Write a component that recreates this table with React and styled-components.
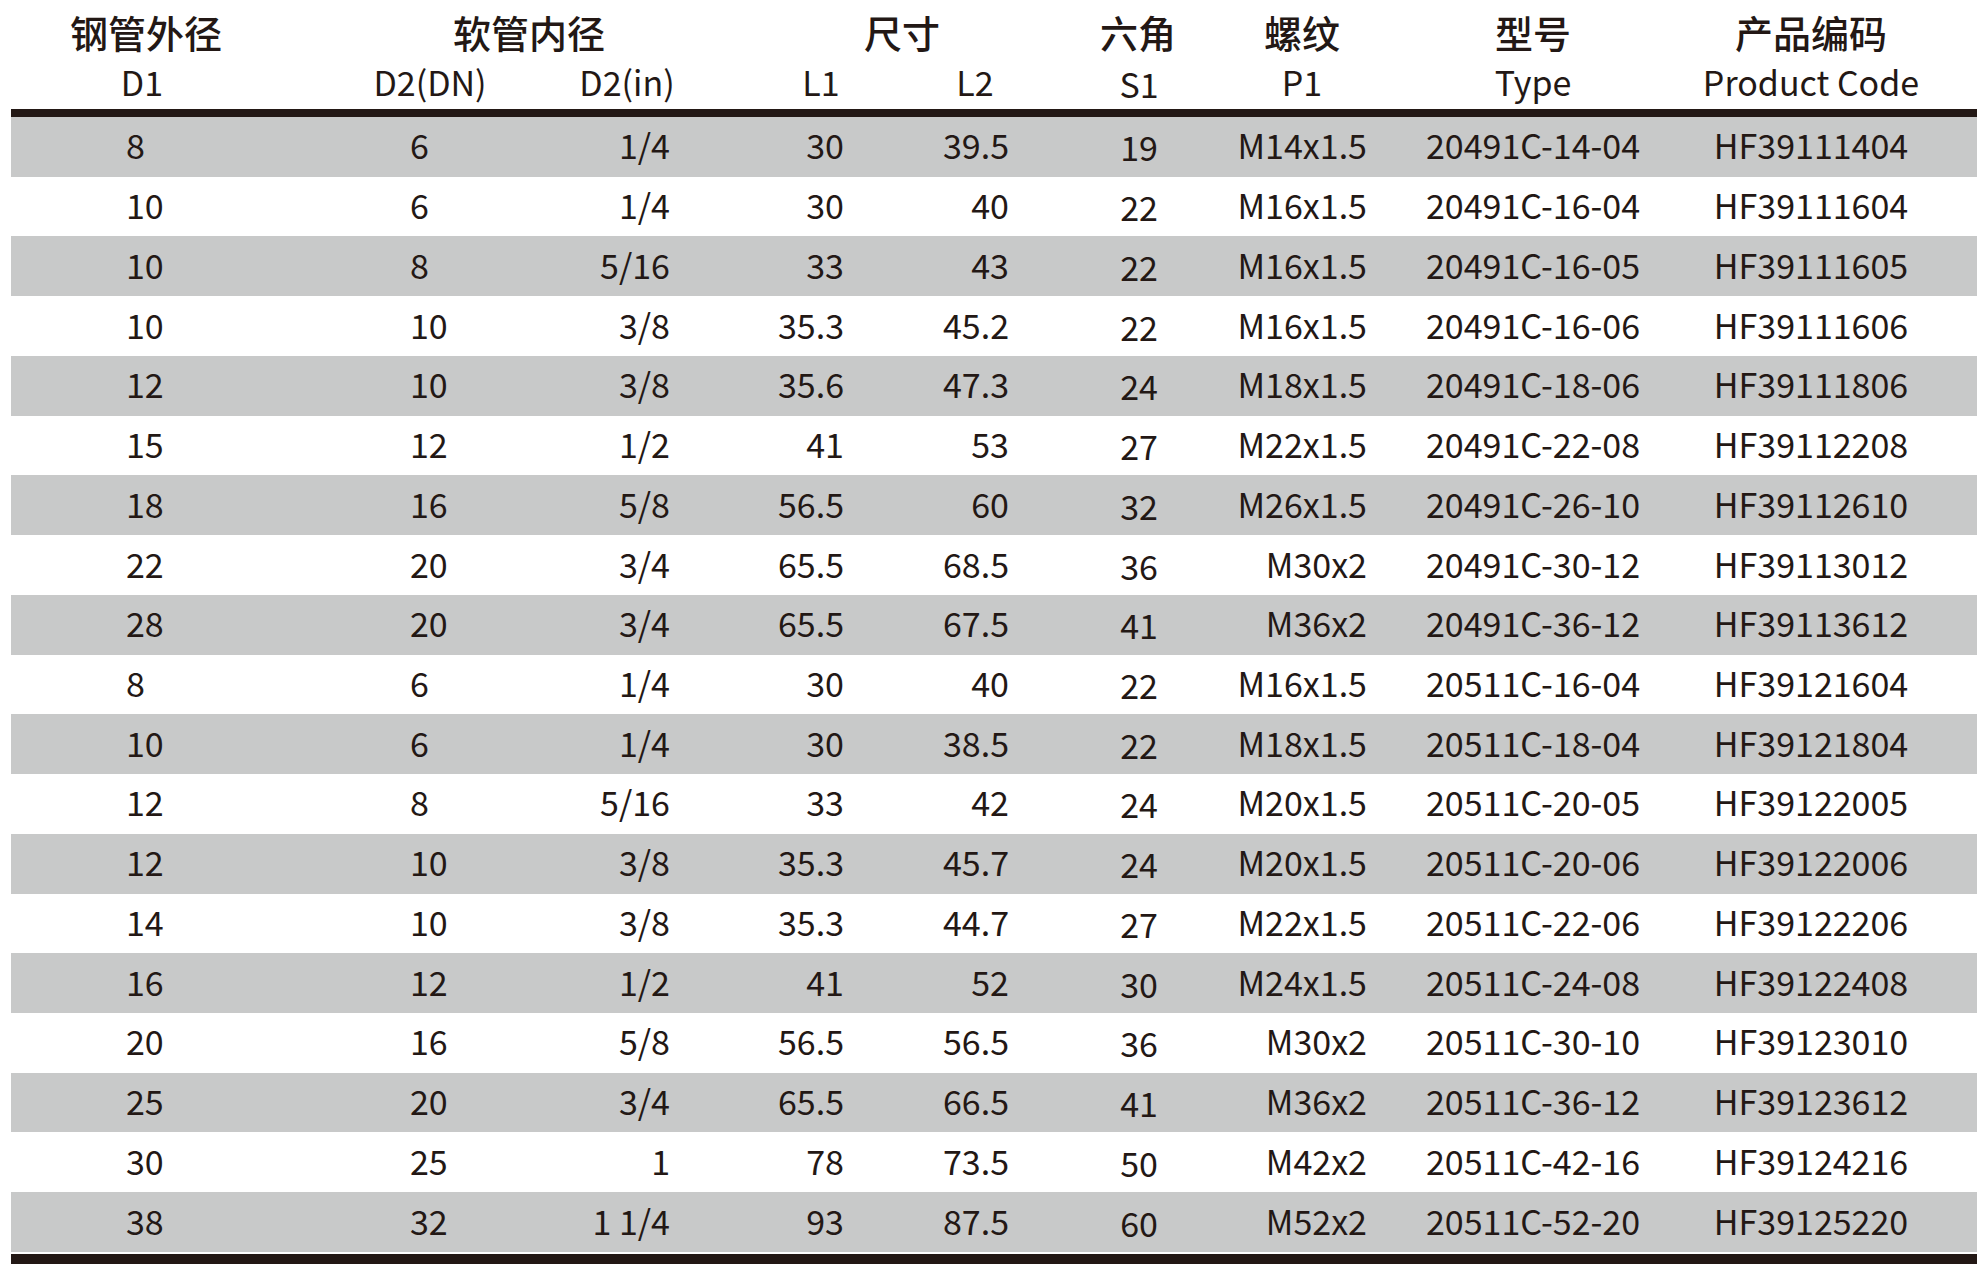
import React from "react";
import styled, { createGlobalStyle } from "styled-components";

const GlobalStyle = createGlobalStyle`
  html, body {
    margin: 0;
    padding: 0;
    background: #fff;
  }
  body {
    font-family: "Noto Sans CJK SC", "Noto Sans", sans-serif;
    color: #231815;
  }
`;

// 列宽与对齐 (左边界 11px)
const COLS = "269px 250px 170px 180px 170px 170px 200px 240px 317px";

const groups = [
  { label: "钢管外径", span: 1, pl: 1, pr: 0 },
  { label: "软管内径", span: 2, pl: 78, pr: 0 },
  { label: "尺寸", span: 2, pl: 54, pr: 0 },
  { label: "六角", span: 1, pl: 6, pr: 0 },
  { label: "螺纹", span: 1, pl: 0, pr: 36 },
  { label: "型号", span: 1, pl: 0, pr: 14 },
  { label: "产品编码", span: 1, pl: 0, pr: 15 },
];

const columns = [
  { sub: "D1", subPl: 0, subPr: 7, align: "left", pl: 115, pr: 0 },
  { sub: "D2(DN)", subPl: 50, subPr: 0, align: "left", pl: 130, pr: 0 },
  { sub: "D2(in)", subPl: 24, subPr: 0, align: "right", pl: 0, pr: 30 },
  { sub: "L1", subPl: 62, subPr: 0, align: "right", pl: 0, pr: 36 },
  { sub: "L2", subPl: 20, subPr: 0, align: "right", pl: 0, pr: 41 },
  { sub: "S1", subPl: 8, subPr: 0, align: "center", pl: 8, pr: 0, low: true },
  { sub: "P1", subPl: 0, subPr: 36, align: "right", pl: 0, pr: 53 },
  { sub: "Type", subPl: 0, subPr: 14, align: "center", pl: 0, pr: 14 },
  { sub: "Product Code", subPl: 0, subPr: 15, align: "center", pl: 0, pr: 15 },
];

const rows = [
  ["8", "6", "1/4", "30", "39.5", "19", "M14x1.5", "20491C-14-04", "HF39111404"],
  ["10", "6", "1/4", "30", "40", "22", "M16x1.5", "20491C-16-04", "HF39111604"],
  ["10", "8", "5/16", "33", "43", "22", "M16x1.5", "20491C-16-05", "HF39111605"],
  ["10", "10", "3/8", "35.3", "45.2", "22", "M16x1.5", "20491C-16-06", "HF39111606"],
  ["12", "10", "3/8", "35.6", "47.3", "24", "M18x1.5", "20491C-18-06", "HF39111806"],
  ["15", "12", "1/2", "41", "53", "27", "M22x1.5", "20491C-22-08", "HF39112208"],
  ["18", "16", "5/8", "56.5", "60", "32", "M26x1.5", "20491C-26-10", "HF39112610"],
  ["22", "20", "3/4", "65.5", "68.5", "36", "M30x2", "20491C-30-12", "HF39113012"],
  ["28", "20", "3/4", "65.5", "67.5", "41", "M36x2", "20491C-36-12", "HF39113612"],
  ["8", "6", "1/4", "30", "40", "22", "M16x1.5", "20511C-16-04", "HF39121604"],
  ["10", "6", "1/4", "30", "38.5", "22", "M18x1.5", "20511C-18-04", "HF39121804"],
  ["12", "8", "5/16", "33", "42", "24", "M20x1.5", "20511C-20-05", "HF39122005"],
  ["12", "10", "3/8", "35.3", "45.7", "24", "M20x1.5", "20511C-20-06", "HF39122006"],
  ["14", "10", "3/8", "35.3", "44.7", "27", "M22x1.5", "20511C-22-06", "HF39122206"],
  ["16", "12", "1/2", "41", "52", "30", "M24x1.5", "20511C-24-08", "HF39122408"],
  ["20", "16", "5/8", "56.5", "56.5", "36", "M30x2", "20511C-30-10", "HF39123010"],
  ["25", "20", "3/4", "65.5", "66.5", "41", "M36x2", "20511C-36-12", "HF39123612"],
  ["30", "25", "1", "78", "73.5", "50", "M42x2", "20511C-42-16", "HF39124216"],
  ["38", "32", "1 1/4", "93", "87.5", "60", "M52x2", "20511C-52-20", "HF39125220"],
];

const justify = { left: "flex-start", right: "flex-end", center: "center" };

const App = () => {
  return (
    <>
      <GlobalStyle />
      <Page>
        <Table>
          <GroupRow>
            {groups.map((g) => (
              <GroupCell key={g.label} $span={g.span} $pl={g.pl} $pr={g.pr}>
                {g.label}
              </GroupCell>
            ))}
          </GroupRow>
          <SubRow>
            {columns.map((c) => (
              <SubCell key={c.sub} $pl={c.subPl} $pr={c.subPr} $low={c.low}>
                {c.sub}
              </SubCell>
            ))}
          </SubRow>
          <TopRule />
          {rows.map((r, i) => (
            <BodyRow key={i} $shade={i % 2 === 0}>
              {r.map((v, j) => (
                <DataCell
                  key={j}
                  $align={columns[j].align}
                  $pl={columns[j].pl}
                  $pr={columns[j].pr}
                  $low={columns[j].low}
                >
                  {v}
                </DataCell>
              ))}
            </BodyRow>
          ))}
          <BottomRule />
        </Table>
      </Page>
    </>
  );
};

const Page = styled.div`
  width: 1979px;
  height: 1270px;
  padding-left: 11px;
  box-sizing: border-box;
  overflow: hidden;
`;
const Table = styled.div`
  width: 1966px;
  display: flex;
  flex-direction: column;
`;
const GroupRow = styled.div`
  display: grid;
  grid-template-columns: ${COLS};
  grid-template-rows: 62px;
`;
const GroupCell = styled.div`
  grid-column: span ${(p) => p.$span};
  display: flex;
  align-items: center;
  justify-content: center;
  box-sizing: border-box;
  padding: 2px ${(p) => p.$pr}px 0 ${(p) => p.$pl}px;
  font-size: 38px;
  font-weight: 500;
  line-height: 1;
  white-space: nowrap;
`;
const SubRow = styled.div`
  display: grid;
  grid-template-columns: ${COLS};
  grid-template-rows: 39px;
  margin-bottom: 8px;
`;
const SubCell = styled.div`
  display: flex;
  align-items: center;
  justify-content: center;
  box-sizing: border-box;
  padding: ${(p) => (p.$low ? 4 : 0)}px ${(p) => p.$pr}px 0 ${(p) => p.$pl}px;
  font-size: 34px;
  font-weight: 400;
  line-height: 1;
  white-space: nowrap;
`;
const TopRule = styled.div`
  height: 8px;
  background: #231815;
`;
const BodyRow = styled.div`
  display: grid;
  grid-template-columns: ${COLS};
  grid-template-rows: 59.74px;
  background: ${(p) => (p.$shade ? "#c8c9c9" : "#fff")};
`;
const DataCell = styled.div`
  display: flex;
  align-items: center;
  justify-content: ${(p) => justify[p.$align]};
  box-sizing: border-box;
  padding: 0 ${(p) => p.$pr}px ${(p) => (p.$low ? 0 : 4)}px ${(p) => p.$pl}px;
  font-size: 34px;
  font-weight: 400;
  white-space: pre;
`;
const BottomRule = styled.div`
  height: 10px;
  margin-top: 2px;
  background: #231815;
`;

export default App;
